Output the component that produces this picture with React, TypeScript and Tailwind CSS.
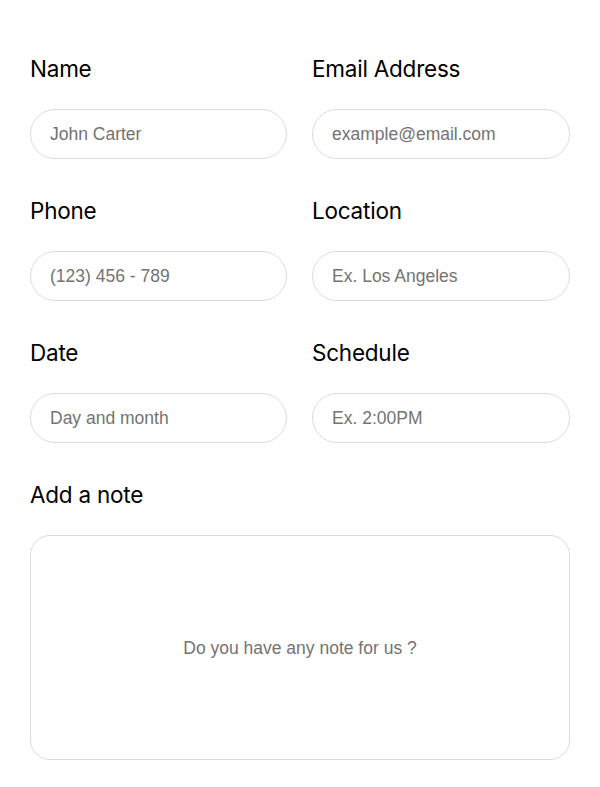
import React from 'react';

const fields = [
  { label: 'Name', placeholder: 'John Carter' },
  { label: 'Email Address', placeholder: 'example@email.com' },
  { label: 'Phone', placeholder: '(123) 456 - 789' },
  { label: 'Location', placeholder: 'Ex. Los Angeles' },
  { label: 'Date', placeholder: 'Day and month' },
  { label: 'Schedule', placeholder: 'Ex. 2:00PM' },
];

const labelCls = "block text-[22.5px] leading-[28px] text-black font-['Inter',sans-serif] tracking-[-0.01em] mb-[26px]";

const App: React.FC = () => {
  return (
    <main className="min-h-screen bg-white px-[30px] pt-[55px]">
      <form className="grid grid-cols-[257px_1fr] gap-x-[25px] gap-y-[38px]">
        {fields.map((f) => (
          <div key={f.label}>
            <label className={labelCls}>{f.label}</label>
            <input
              type="text"
              placeholder={f.placeholder}
              className="w-full h-[50px] rounded-full border border-[#dcdcdc] bg-white pl-[19px] pr-4 text-[17.5px] font-['Liberation_Sans',Arial,sans-serif] text-black placeholder:text-[#737373] outline-none"
            />
          </div>
        ))}
        <div className="col-span-2">
          <label className={labelCls}>Add a note</label>
          <textarea
            placeholder="Do you have any note for us ?"
            className="block w-full h-[225px] resize-none rounded-[20px] border border-[#dcdcdc] bg-white px-5 pt-[99px] text-center text-[17.5px] font-['Liberation_Sans',Arial,sans-serif] text-black placeholder:text-[#737373] outline-none"
          />
        </div>
      </form>
    </main>
  );
};

export default App;
